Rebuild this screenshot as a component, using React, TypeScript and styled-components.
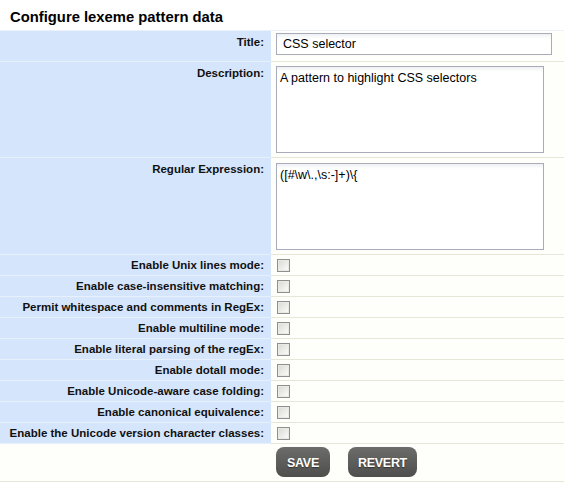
import styled, { createGlobalStyle } from "styled-components";

const GlobalStyle = createGlobalStyle`
  body {
    margin: 0;
    background: #ffffff;
    font-family: "Liberation Sans", Arial, sans-serif;
  }
`;

const Page = styled.div`
  width: 564px;
  background: #ffffff;
`;
const Heading = styled.h1`
  margin: 0;
  height: 30px;
  padding-left: 10px;
  box-sizing: border-box;
  display: flex;
  align-items: center;
  padding-top: 3px;
  font-size: 14.8px;
  font-weight: bold;
  color: #000;
`;
const Table = styled.div`
  border-top: 1px solid #eaf1fb;
`;
const Row = styled.div<{ $h: number }>`
  display: grid;
  grid-template-columns: 271px 1fr;
  height: ${(p) => p.$h}px;
`;
const Label = styled.div<{ $center?: boolean; $blank?: boolean }>`
  height: 100%;
  box-sizing: border-box;
  background: ${(p) => (p.$blank ? "#fefefb" : "#d5e5fb")};
  border-bottom: 1px solid ${(p) => (p.$blank ? "#e7e7d8" : "#e8f0fc")};
  padding: ${(p) => (p.$center ? "0 7px 0 0" : "4px 7px 0 0")};
  display: flex;
  justify-content: flex-end;
  align-items: ${(p) => (p.$center ? "center" : "flex-start")};
  font-size: 11.5px;
  line-height: 14px;
  font-weight: bold;
  color: #111;
  white-space: nowrap;
`;
const Value = styled.div<{ $top: number }>`
  height: 100%;
  box-sizing: border-box;
  background: #fefefb;
  border-bottom: 1px solid #e7e7d8;
  padding: ${(p) => p.$top}px 0 0 5px;
  display: flex;
  align-items: flex-start;
  gap: 18px;
`;
const TextInput = styled.input`
  width: 276px;
  height: 22px;
  box-sizing: border-box;
  border: 1px solid #a9abba;
  background: linear-gradient(#eef0f3, #ffffff 5px);
  padding: 0 0 0 6px;
  font-family: "Liberation Sans", Arial, sans-serif;
  font-size: 12.5px;
  color: #000;
  outline: none;
`;
const TextArea = styled.textarea`
  width: 268px;
  height: 87px;
  box-sizing: border-box;
  border: 1px solid #a9abba;
  background: linear-gradient(#eef0f3, #ffffff 5px);
  padding: 4px 3px;
  margin: 0;
  resize: none;
  font-family: "Liberation Sans", Arial, sans-serif;
  font-size: 12.5px;
  line-height: 15px;
  color: #000;
  outline: none;
`;
const Check = styled.input`
  appearance: none;
  margin: 0 0 0 1px;
  width: 13px;
  height: 13px;
  box-sizing: border-box;
  border: 1px solid #8e8f8f;
  background: linear-gradient(135deg, #d8d8d4, #f6f6f4 80%);
  box-shadow: inset 0 0 0 1px #e9e9e6;
`;
const Button = styled.button<{ $w: number }>`
  width: ${(p) => p.$w}px;
  height: 30px;
  border: none;
  border-radius: 8px;
  background: linear-gradient(#6c6c6a, #4e4f4d);
  color: #ffffff;
  font-family: "Liberation Sans", Arial, sans-serif;
  font-size: 12.5px;
  font-weight: bold;
  letter-spacing: -0.3px;
  text-shadow: 0 1px 1px #333;
  padding: 2px 0 0;
`;

const flags = [
  "Enable Unix lines mode:",
  "Enable case-insensitive matching:",
  "Permit whitespace and comments in RegEx:",
  "Enable multiline mode:",
  "Enable literal parsing of the regEx:",
  "Enable dotall mode:",
  "Enable Unicode-aware case folding:",
  "Enable canonical equivalence:",
  "Enable the Unicode version character classes:",
];

export default function App() {
  return (
    <Page>
      <GlobalStyle />
      <Heading>Configure lexeme pattern data</Heading>
      <Table>
        <Row $h={31}>
          <Label>Title:</Label>
          <Value $top={2}>
            <TextInput defaultValue="CSS selector" />
          </Value>
        </Row>
        <Row $h={96}>
          <Label>Description:</Label>
          <Value $top={4}>
            <TextArea defaultValue="A pattern to highlight CSS selectors" />
          </Value>
        </Row>
        <Row $h={97}>
          <Label>Regular Expression:</Label>
          <Value $top={5}>
            <TextArea defaultValue={"([#\\w\\.,\\s:-]+)\\{"} />
          </Value>
        </Row>
        {flags.map((f) => (
          <Row $h={21} key={f}>
            <Label $center>{f}</Label>
            <Value $top={4}>
              <Check type="checkbox" />
            </Value>
          </Row>
        ))}
        <Row $h={38}>
          <Label $blank />
          <Value $top={3}>
            <Button $w={54}>SAVE</Button>
            <Button $w={69}>REVERT</Button>
          </Value>
        </Row>
      </Table>
    </Page>
  );
}
